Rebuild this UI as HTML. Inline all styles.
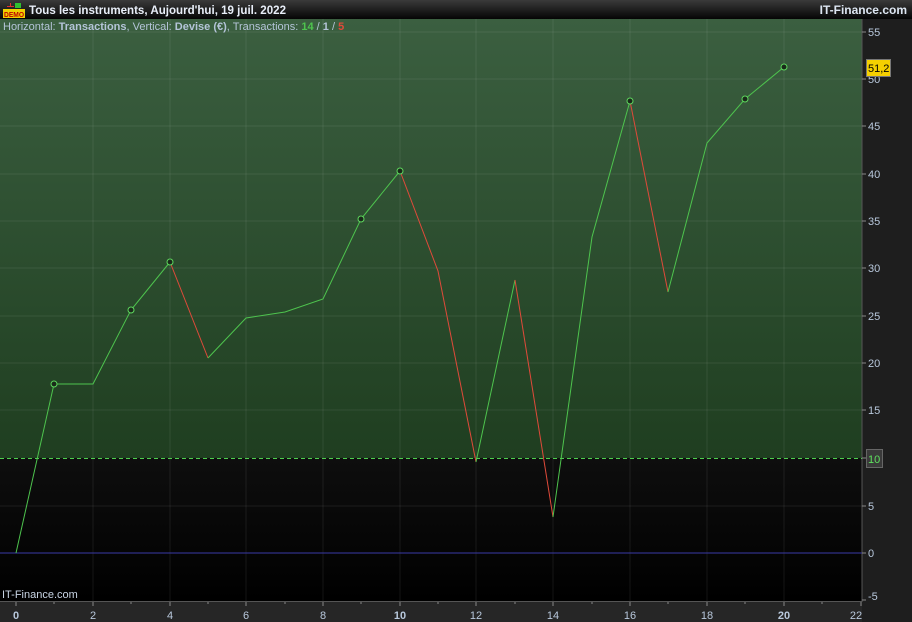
<!DOCTYPE html><html><head><style>
body{margin:0;background:#000;width:912px;height:622px;overflow:hidden;font-family:"Liberation Sans",sans-serif}
svg{display:block}
</style></head><body>
<svg width="912" height="622" xmlns="http://www.w3.org/2000/svg" font-family="Liberation Sans, sans-serif">
<defs>
<linearGradient id="tb" x1="0" y1="0" x2="0" y2="1"><stop offset="0" stop-color="#3a3a3a"/><stop offset="1" stop-color="#050505"/></linearGradient>
<linearGradient id="gr" x1="0" y1="0" x2="0" y2="1"><stop offset="0" stop-color="#3b5f40"/><stop offset="1" stop-color="#1f3e20"/></linearGradient>
<linearGradient id="bk" x1="0" y1="0" x2="0" y2="1"><stop offset="0" stop-color="#0e0e0e"/><stop offset="1" stop-color="#000"/></linearGradient>
</defs>
<rect x="0" y="0" width="912" height="622" fill="#1e1e1e"/>
<rect x="0" y="0" width="912" height="19" fill="url(#tb)"/>
<rect x="0" y="19" width="862" height="439" fill="url(#gr)"/>
<rect x="0" y="458" width="862" height="143" fill="url(#bk)"/>
<rect x="0" y="601" width="862" height="21" fill="#262626"/>
<line x1="862" y1="19" x2="862" y2="602" stroke="#555"/>
<line x1="0" y1="601.5" x2="862" y2="601.5" stroke="#555"/>
<g stroke="#ffffff" stroke-opacity="0.08">
<line x1="93" y1="19" x2="93" y2="601"/><line x1="170" y1="19" x2="170" y2="601"/><line x1="246" y1="19" x2="246" y2="601"/><line x1="323" y1="19" x2="323" y2="601"/><line x1="400" y1="19" x2="400" y2="601"/><line x1="476" y1="19" x2="476" y2="601"/><line x1="553" y1="19" x2="553" y2="601"/><line x1="630" y1="19" x2="630" y2="601"/><line x1="707" y1="19" x2="707" y2="601"/><line x1="784" y1="19" x2="784" y2="601"/>
<line x1="0" y1="32" x2="862" y2="32"/><line x1="0" y1="79" x2="862" y2="79"/><line x1="0" y1="126" x2="862" y2="126"/><line x1="0" y1="174" x2="862" y2="174"/><line x1="0" y1="221" x2="862" y2="221"/><line x1="0" y1="268" x2="862" y2="268"/><line x1="0" y1="316" x2="862" y2="316"/><line x1="0" y1="363" x2="862" y2="363"/><line x1="0" y1="410" x2="862" y2="410"/><line x1="0" y1="506" x2="862" y2="506"/>
</g>
<line x1="0" y1="553" x2="862" y2="553" stroke="#3a3aa8"/>
<line x1="0" y1="458.5" x2="862" y2="458.5" stroke="#4ed04e" stroke-dasharray="4,3"/>
<g fill="none" stroke-width="1">
<polyline stroke="#4ec44e" points="16,553 54,384 93,384 131,310 170,262"/>
<polyline stroke="#e04a3a" points="170,262 208,358"/>
<polyline stroke="#4ec44e" points="208,358 246,318 285,312 323,299 361,219 400,171"/>
<polyline stroke="#e04a3a" points="400,171 438,271 476,462"/>
<polyline stroke="#4ec44e" points="476,462 515,280"/>
<polyline stroke="#e04a3a" points="515,280 553,517"/>
<polyline stroke="#4ec44e" points="553,517 592,237 630,101"/>
<polyline stroke="#e04a3a" points="630,101 668,292"/>
<polyline stroke="#4ec44e" points="668,292 707,143 745,99 784,67"/>
</g>
<g fill="#1a2a1a" stroke="#5ed85e">
<circle cx="54" cy="384" r="3"/><circle cx="131" cy="310" r="3"/><circle cx="170" cy="262" r="3"/><circle cx="361" cy="219" r="3"/><circle cx="400" cy="171" r="3"/><circle cx="630" cy="101" r="3"/><circle cx="745" cy="99" r="3"/><circle cx="784" cy="67" r="3"/>
</g>
<g stroke="#888"><line x1="862" y1="32" x2="866" y2="32"/><line x1="862" y1="79" x2="866" y2="79"/><line x1="862" y1="126" x2="866" y2="126"/><line x1="862" y1="174" x2="866" y2="174"/><line x1="862" y1="221" x2="866" y2="221"/><line x1="862" y1="268" x2="866" y2="268"/><line x1="862" y1="316" x2="866" y2="316"/><line x1="862" y1="363" x2="866" y2="363"/><line x1="862" y1="410" x2="866" y2="410"/><line x1="862" y1="458" x2="866" y2="458"/><line x1="862" y1="506" x2="866" y2="506"/><line x1="862" y1="553" x2="866" y2="553"/><line x1="862" y1="600" x2="866" y2="600"/></g>
<g fill="#b8c8dc" font-size="11">
<text x="868" y="36">55</text><text x="868" y="83">50</text><text x="868" y="130">45</text><text x="868" y="178">40</text><text x="868" y="225">35</text><text x="868" y="272">30</text><text x="868" y="320">25</text><text x="868" y="367">20</text><text x="868" y="414">15</text><text x="868" y="510">5</text><text x="868" y="557">0</text><text x="868" y="600">-5</text>
</g>
<rect x="866.5" y="449.5" width="16" height="18" fill="#3a3a3a" stroke="#666"/>
<text x="868" y="463" fill="#5ee05e" font-size="11">10</text>
<rect x="866.5" y="59.5" width="24" height="17" fill="#f5d000" stroke="#777"/>
<text x="868" y="72" fill="#000" font-size="11">51,2</text>
<g stroke="#888"><line x1="16" y1="602" x2="16" y2="606"/><line x1="54" y1="602" x2="54" y2="604"/><line x1="93" y1="602" x2="93" y2="606"/><line x1="131" y1="602" x2="131" y2="604"/><line x1="170" y1="602" x2="170" y2="606"/><line x1="208" y1="602" x2="208" y2="604"/><line x1="246" y1="602" x2="246" y2="606"/><line x1="285" y1="602" x2="285" y2="604"/><line x1="323" y1="602" x2="323" y2="606"/><line x1="361" y1="602" x2="361" y2="604"/><line x1="400" y1="602" x2="400" y2="606"/><line x1="438" y1="602" x2="438" y2="604"/><line x1="476" y1="602" x2="476" y2="606"/><line x1="515" y1="602" x2="515" y2="604"/><line x1="553" y1="602" x2="553" y2="606"/><line x1="592" y1="602" x2="592" y2="604"/><line x1="630" y1="602" x2="630" y2="606"/><line x1="668" y1="602" x2="668" y2="604"/><line x1="707" y1="602" x2="707" y2="606"/><line x1="745" y1="602" x2="745" y2="604"/><line x1="784" y1="602" x2="784" y2="606"/><line x1="822" y1="602" x2="822" y2="604"/><line x1="861" y1="602" x2="861" y2="606"/></g>
<g fill="#b8c8dc" font-size="11" text-anchor="middle">
<text x="16" y="619" font-weight="bold">0</text><text x="93" y="619">2</text><text x="170" y="619">4</text><text x="246" y="619">6</text><text x="323" y="619">8</text><text x="400" y="619" font-weight="bold">10</text><text x="476" y="619">12</text><text x="553" y="619">14</text><text x="630" y="619">16</text><text x="707" y="619">18</text><text x="784" y="619" font-weight="bold">20</text><text x="856" y="619">22</text>
</g>
<text x="2" y="598" fill="#c8d4e4" font-size="11">IT-Finance.com</text>
<rect x="3" y="9" width="22" height="9" fill="#f0d000"/>
<text x="4" y="17" fill="#c00000" font-size="7" font-weight="bold" textLength="20" lengthAdjust="spacingAndGlyphs">DEMO</text>
<rect x="7" y="6" width="7" height="1" fill="#e03030"/><rect x="10" y="3" width="1" height="4" fill="#e03030"/><rect x="15" y="3" width="6" height="5" fill="#30c030"/>
<text x="29" y="14" fill="#e8eef8" font-size="12" font-weight="bold" textLength="257" lengthAdjust="spacingAndGlyphs">Tous les instruments, Aujourd'hui, 19 juil. 2022</text>
<text x="907" y="14" fill="#dde6f2" font-size="12" font-weight="bold" text-anchor="end">IT-Finance.com</text>
<text x="3" y="30" font-size="11" fill="#b4c4d8">Horizontal: <tspan font-weight="bold">Transactions</tspan>, Vertical: <tspan font-weight="bold">Devise (€)</tspan>, Transactions: <tspan fill="#4ec44e" font-weight="bold">14</tspan> / <tspan font-weight="bold">1</tspan> / <tspan fill="#e04a3a" font-weight="bold">5</tspan></text>
</svg>
</body></html>
